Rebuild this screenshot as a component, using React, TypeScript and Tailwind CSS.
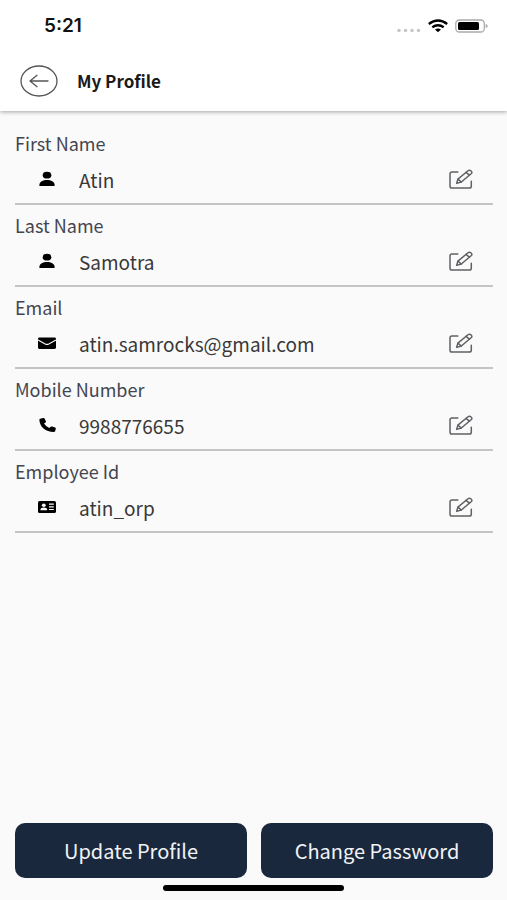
import { useId, useRef, useState } from "react";
import type { ReactNode } from "react";

interface ProfileField {
  key: string;
  label: string;
  type: string;
  value: string;
  icon: ReactNode;
}

function PersonIcon() {
  return (
    <svg aria-hidden viewBox="0 0 20 16" className="h-4 w-5" fill="#000">
      <ellipse cx="10" cy="4.2" rx="4.3" ry="3.4" />
      <path d="M2.4 15v-1.2C2.4 10.8 6 9 10 9s7.6 1.8 7.6 4.8V15Z" />
    </svg>
  );
}

function MailIcon() {
  return (
    <svg aria-hidden viewBox="0 0 20 16" className="h-4 w-5">
      <rect x="1" y="2.500" width="18" height="11.500" rx="1.400" fill="#000" />
      <path d="M1 5l7.200 3.900q1.800.9 3.600 0L19 5" fill="none" stroke="#fafafa" strokeWidth="1.100" />
    </svg>
  );
}

function PhoneIcon() {
  return (
    <svg aria-hidden viewBox="0 0 20 16" className="h-4 w-5" fill="#000">
      <path d="M3.200 1.700l3-.7q1-.2 1.400.6l1.300 2.700q.3.700-.4 1.200L7 6.600q1.700 2.800 5.200 4.300l1.500-1.200q.6-.5 1.400-.2l3 1.100q.9.400.7 1.200l-.7 2.400q-.3.800-1.300.8C8.700 15 2.400 9.600 2.400 2.700q0-.8.8-1Z" />
    </svg>
  );
}

function IdCardIcon() {
  return (
    <svg aria-hidden viewBox="0 0 20 16" className="h-4 w-5">
      <rect x="1" y="2" width="18" height="12" rx="1.600" fill="#000" />
      <g fill="#fafafa">
        <ellipse cx="6.800" cy="6.200" rx="1.900" ry="1.700" />
        <path d="M3.400 11.200c0-1.800 1.300-2.600 3.400-2.600s3.400.8 3.400 2.600Z" />
        <path d="M12 4.600h4.800v1.100H12zM12 7.300h4.800v1.100H12zM12 10h4.800v1.100H12z" />
      </g>
    </svg>
  );
}

function EditIcon() {
  return (
    <svg
      aria-hidden
      viewBox="0 0 24 22"
      className="h-[22px] w-6"
      fill="none"
      stroke="#5f6164"
      strokeWidth="1.500"
      strokeLinecap="round"
      strokeLinejoin="round"
    >
      <path d="M8.800 4H3Q1 4 1 5.800v12.400Q1 20 3 20h17.300q2 0 2-1.800v-5" />
      <path d="M7.600 15.400l1.300-4.200L18.700 3q1.700-1.300 3.400 0 1.600 1.400 0 2.800L12.300 14Z" />
      <path d="M8.900 11.200l3.400 2.800M17 4.400l3.400 2.800" />
    </svg>
  );
}

const FIELDS: ProfileField[] = [
  { key: "first", label: "First Name", type: "text", value: "Atin", icon: <PersonIcon /> },
  { key: "last", label: "Last Name", type: "text", value: "Samotra", icon: <PersonIcon /> },
  { key: "email", label: "Email", type: "email", value: "atin.samrocks@gmail.com", icon: <MailIcon /> },
  { key: "mobile", label: "Mobile Number", type: "tel", value: "9988776655", icon: <PhoneIcon /> },
  { key: "employee", label: "Employee Id", type: "text", value: "atin_orp", icon: <IdCardIcon /> },
];

function StatusBar() {
  return (
    <div className="flex h-[52px] items-center justify-between pl-11 pr-[19px]">
      <span className="font-['Inter',sans-serif] text-[19px] leading-6 font-semibold text-[#111]">5:21</span>
      <div className="flex items-center gap-[7px]">
        <svg aria-hidden viewBox="0 0 24 14" className="h-[14px] w-6" fill="#c8c8c8">
          <circle cx="2" cy="11.500" r="1.800" />
          <circle cx="8.500" cy="11.500" r="1.800" />
          <circle cx="15" cy="11.500" r="1.800" />
          <circle cx="21.500" cy="11.500" r="1.800" />
        </svg>
        <svg aria-hidden viewBox="0 0 20 14" className="h-[14px] w-5" fill="none" stroke="#000" strokeWidth="2.300">
          <path d="M.8 5Q10-2 19.200 5" />
          <path d="M4.300 8.300q5.700-4.200 11.400 0" />
          <path d="M7 10.500q3-2 6 0l-3 2.700Z" fill="#000" stroke="none" />
        </svg>
        <svg aria-hidden viewBox="0 0 33 14" className="h-[14px] w-[33px]">
          <rect x=".8" y="1" width="28.500" height="12" rx="3.500" fill="none" stroke="#aaa" strokeWidth="1.300" />
          <rect x="3" y="3" width="21" height="8" rx="1.500" fill="#000" />
          <path d="M30.700 5q2 .6 2 2t-2 2Z" fill="#aaa" />
        </svg>
      </div>
    </div>
  );
}

function FieldRow({ field, value, onChange }: { field: ProfileField; value: string; onChange: (value: string) => void }) {
  const id = useId();
  const inputRef = useRef<HTMLInputElement>(null);

  return (
    <div className="h-[82px] border-b-2 border-[#c4c4c4] pt-2">
      <label htmlFor={id} className="block text-[18px] leading-6 text-[#43454f]">
        {field.label}
      </label>
      <div className="flex h-12 items-center">
        <span className="flex w-16 shrink-0 justify-center">{field.icon}</span>
        <input
          ref={inputRef}
          id={id}
          type={field.type}
          value={value}
          onChange={(e) => onChange(e.target.value)}
          className="h-8 min-w-0 flex-1 bg-transparent text-[19px] leading-6 text-[#383838] outline-none"
        />
        <button
          type="button"
          aria-label={`Edit ${field.label}`}
          onClick={() => inputRef.current?.focus()}
          className="mr-5 shrink-0"
        >
          <EditIcon />
        </button>
      </div>
    </div>
  );
}

export default function App() {
  const [values, setValues] = useState<Record<string, string>>(() =>
    Object.fromEntries(FIELDS.map((f) => [f.key, f.value])),
  );

  return (
    <div className="flex min-h-screen flex-col bg-[#fafafa] font-['Noto_Sans_CJK_JP',sans-serif]">
      <header className="bg-white shadow-[0_1px_4px_rgba(0,0,0,0.35)]">
        <StatusBar />
        <div className="flex h-[59px] items-center gap-[19px] px-5 pb-[2px]">
          <button type="button" aria-label="Back">
            <svg
              aria-hidden
              viewBox="0 0 38 32"
              className="h-8 w-[38px]"
              fill="none"
              stroke="#555"
              strokeWidth="1.300"
              strokeLinecap="round"
              strokeLinejoin="round"
            >
              <ellipse cx="19" cy="16" rx="18" ry="15" />
              <path d="M28 16H10M17 10.300L10 16l7 5.700" />
            </svg>
          </button>
          <h1 className="text-[17px] leading-6 font-bold text-[#1a1a1a]">My Profile</h1>
        </div>
      </header>

      <form className="flex flex-1 flex-col pt-3 pr-[14px] pl-[15px]" onSubmit={(e) => e.preventDefault()}>
        {FIELDS.map((field) => (
          <FieldRow
            key={field.key}
            field={field}
            value={values[field.key]}
            onChange={(value) => setValues((prev) => ({ ...prev, [field.key]: value }))}
          />
        ))}

        <div className="mt-auto grid grid-cols-2 gap-[14px] pt-8">
          <button type="submit" className="h-[55px] rounded-[10px] bg-[#1a283d] text-[20px] leading-6 text-[#f1f4f7]">
            Update Profile
          </button>
          <button type="button" className="h-[55px] rounded-[10px] bg-[#1a283d] text-[20px] leading-6 text-[#f1f4f7]">
            Change Password
          </button>
        </div>
      </form>

      <div className="flex h-[22px] shrink-0 justify-center pt-[7px]">
        <div className="h-[6px] w-[181px] rounded-full bg-black" />
      </div>
    </div>
  );
}
